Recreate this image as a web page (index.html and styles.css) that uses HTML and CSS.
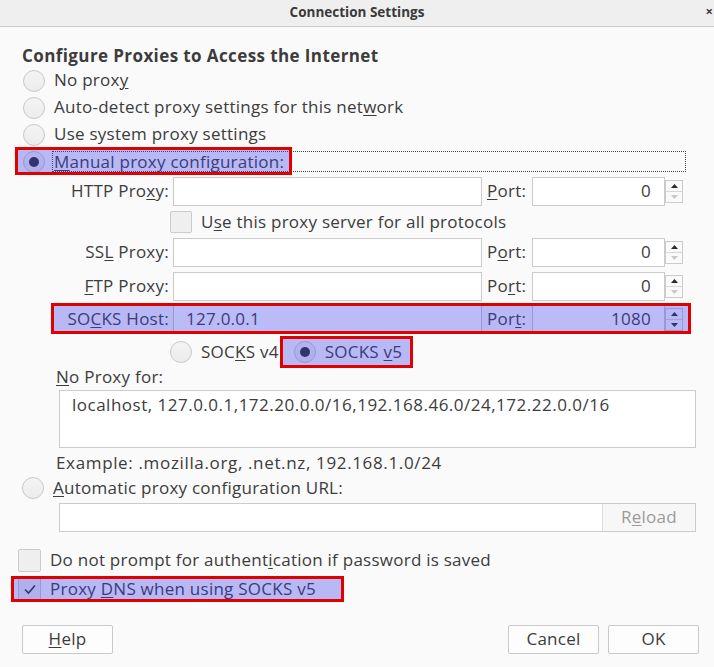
FILE: index.html
```html
<!DOCTYPE html>
<html>
<head>
<meta charset="utf-8">
<link rel="stylesheet" href="styles.css">
</head>
<body>
<div class="titlebar"><span class="title">Connection Settings</span><span class="close">×</span></div>
<main class="dialog">
  <h1 class="heading">Configure Proxies to Access the Internet</h1>
  <div class="radio-row"><span class="radio"></span><span class="lbl">No prox<u>y</u></span></div>
  <div class="radio-row"><span class="radio"></span><span class="lbl">Auto-detect proxy settings for this net<u>w</u>ork</span></div>
  <div class="radio-row"><span class="radio"></span><span class="lbl">Use system proxy settings</span></div>
  <div class="radio-row manual">
    <span class="radio checked"></span><span class="lbl focus"><u>M</u>anual proxy configuration:</span>
    <span class="mark mark-manual"></span>
  </div>

  <div class="prow first">
    <span class="plabel">HTTP Pro<u>x</u>y:</span>
    <span class="field host"></span>
    <span class="portlbl"><u>P</u>ort:</span>
    <span class="field port">0</span>
    <span class="spin"><span class="up"><svg width="7" height="4" viewBox="0 0 7 4"><polygon points="0,4 7,4 3.5,0" fill="#2a2a2a"/></svg></span><span class="down"><svg width="7" height="4" viewBox="0 0 7 4"><polygon points="0,0 7,0 3.5,4" fill="#c8c8c8"/></svg></span></span>
  </div>
  <div class="crow"><span class="check"></span><span class="lbl">U<u>s</u>e this proxy server for all protocols</span></div>
  <div class="prow">
    <span class="plabel">SS<u>L</u> Proxy:</span>
    <span class="field host"></span>
    <span class="portlbl">P<u>o</u>rt:</span>
    <span class="field port">0</span>
    <span class="spin"><span class="up"><svg width="7" height="4" viewBox="0 0 7 4"><polygon points="0,4 7,4 3.5,0" fill="#2a2a2a"/></svg></span><span class="down"><svg width="7" height="4" viewBox="0 0 7 4"><polygon points="0,0 7,0 3.5,4" fill="#c8c8c8"/></svg></span></span>
  </div>
  <div class="prow ftp">
    <span class="plabel"><u>F</u>TP Proxy:</span>
    <span class="field host"></span>
    <span class="portlbl">Po<u>r</u>t:</span>
    <span class="field port">0</span>
    <span class="spin"><span class="up"><svg width="7" height="4" viewBox="0 0 7 4"><polygon points="0,4 7,4 3.5,0" fill="#2a2a2a"/></svg></span><span class="down"><svg width="7" height="4" viewBox="0 0 7 4"><polygon points="0,0 7,0 3.5,4" fill="#c8c8c8"/></svg></span></span>
  </div>
  <div class="prow socks">
    <span class="plabel">SO<u>C</u>KS Host:</span>
    <span class="field host">127.0.0.1</span>
    <span class="portlbl">Por<u>t</u>:</span>
    <span class="field port">1080</span>
    <span class="spin"><span class="up"><svg width="7" height="4" viewBox="0 0 7 4"><polygon points="0,4 7,4 3.5,0" fill="#2a2a2a"/></svg></span><span class="down"><svg width="7" height="4" viewBox="0 0 7 4"><polygon points="0,0 7,0 3.5,4" fill="#2a2a2a"/></svg></span></span>
    <span class="mark mark-socks"></span>
  </div>
  <div class="vrow">
    <span class="radio"></span><span class="lbl v4">SOC<u>K</u>S v4</span>
    <span class="v5"><span class="radio checked"></span><span class="lbl">SOCKS <u>v</u>5</span><span class="mark mark-v5"></span></span>
  </div>
  <div class="noproxy-lbl"><u>N</u>o Proxy for:</div>
  <div class="textarea">localhost, 127.0.0.1,172.20.0.0/16,192.168.46.0/24,172.22.0.0/16</div>
  <div class="example">Example: .mozilla.org, .net.nz, 192.168.1.0/24</div>
  <div class="radio-row auto"><span class="radio"></span><span class="lbl"><u>A</u>utomatic proxy configuration URL:</span></div>
  <div class="urlrow"><span class="urlfield"></span><span class="reload">R<u>e</u>load</span></div>
  <div class="crow auth"><span class="check"></span><span class="lbl">Do not prompt for authent<u>i</u>cation if password is saved</span></div>
  <div class="crow dns">
    <span class="check"><svg width="14" height="12" viewBox="0 0 14 12"><path d="M2 6.5 L5.5 10 L12 2.5" fill="none" stroke="#2f2f2f" stroke-width="1.6"/></svg></span>
    <span class="lbl">Proxy <u>D</u>NS when using SOCKS v5</span>
    <span class="mark mark-dns"></span>
  </div>
  <div class="buttons">
    <span class="btn"><u>H</u>elp</span>
    <span class="spacer"></span>
    <span class="btn">Cancel</span>
    <span class="btn">OK</span>
  </div>
</main>
</body>
</html>
```
FILE: styles.css
```css
* { box-sizing: border-box; }
html, body { margin: 0; padding: 0; }
body {
  width: 714px;
  height: 667px;
  overflow: hidden;
  background: #fafafa;
  font-family: "Open Sans", "Noto Sans", sans-serif;
  font-size: 17px;
  letter-spacing: 0.25px;
  color: #3c3c3c;
}
u { text-decoration-thickness: 1px; text-underline-offset: 2px; }

.titlebar {
  height: 27px;
  background: #efefef;
  border-bottom: 1px solid #cdcdcd;
  display: flex;
  align-items: center;
  justify-content: center;
  position: relative;
  letter-spacing: 0;
}
.title { font-weight: bold; font-size: 13.5px; color: #3a3a3a; margin-top: -3px; }
.close { position: absolute; right: 1px; top: 2px; font-weight: bold; font-size: 13px; color: #3a3a3a; }

.heading {
  margin: 19px 0 0 22px;
  height: 21px;
  line-height: 20px;
  font-size: 17px;
  letter-spacing: 0.4px;
  font-weight: bold;
  color: #3c3c3c;
}

.radio-row {
  height: 27px;
  display: flex;
  align-items: center;
  padding-left: 23px;
  position: relative;
}
.radio {
  width: 22px;
  height: 22px;
  flex: none;
  border-radius: 50%;
  border: 1px solid #c9c9c9;
  background: linear-gradient(#f4f4f4, #ececec);
  display: flex;
  align-items: center;
  justify-content: center;
}
.radio.checked::after {
  content: "";
  width: 10px;
  height: 10px;
  border-radius: 50%;
  background: #2e2e35;
}
.lbl { margin-left: 9px; white-space: nowrap; line-height: 20px; margin-top: -1px; }
.focus {
  flex: none;
  width: 634px;
  height: 21px;
  line-height: 19px;
  border: 1px dotted #444;
  margin-left: 7px;
  margin-top: 0;
  padding-left: 1px;
}
.mark {
  position: absolute;
  border: 3px solid #e00000;
  background: rgba(61, 61, 235, 0.35);
  pointer-events: none;
}
.mark-manual { left: 15px; top: -1px; width: 277px; height: 28px; }

.prow {
  display: flex;
  margin-left: 54px;
  width: 634px;
  height: 29px;
  align-items: stretch;
  position: relative;
}
.prow.first { margin-top: 2px; }
.prow.ftp { margin-top: 5px; }
.prow.socks { margin-top: 4px; }
.plabel {
  width: 115px;
  text-align: right;
  line-height: 28px;
  white-space: nowrap;
}
.field {
  border: 1px solid #cbcbcb;
  background: #fff;
  line-height: 26px;
}
.host { width: 309px; margin-left: 4px; padding-left: 12px; }
.portlbl { width: 40px; margin-left: 5px; line-height: 28px; white-space: nowrap; }
.port { width: 133px; margin-left: 5px; text-align: right; padding-right: 13px; }
.spin {
  width: 18px;
  height: 23px;
  margin: 3px 0 0 0;
  border: 1px solid #cbcbcb;
  background: #fafafa;
  display: flex;
  flex-direction: column;
}
.spin .up, .spin .down {
  flex: 1;
  display: flex;
  align-items: center;
  justify-content: center;
}
.spin .up { border-bottom: 1px solid #d8d8d8; }
.spin svg { display: block; }
.mark-socks { left: -3px; top: -2px; width: 640px; height: 31px; }

.crow {
  height: 32px;
  display: flex;
  align-items: center;
  padding-left: 170px;
  position: relative;
}
.check {
  width: 22px;
  height: 22px;
  flex: none;
  border: 1px solid #cbcbcb;
  border-radius: 2px;
  background: #efefef;
  display: flex;
  align-items: center;
  justify-content: center;
}

.vrow {
  margin-top: 2px;
  height: 32px;
  display: flex;
  align-items: center;
  padding-left: 170px;
}
.v5 {
  position: relative;
  display: flex;
  align-items: center;
  height: 32px;
  margin-left: 15px;
}
.mark-v5 { left: -14px; top: 0; width: 133px; height: 32px; }

.noproxy-lbl {
  margin-left: 56px;
  height: 18px;
  line-height: 17px;
}
.textarea {
  margin: 4px 0 0 59px;
  width: 637px;
  height: 58px;
  border: 1px solid #cbcbcb;
  background: #fff;
  padding: 3px 0 0 12px;
  line-height: 21px;
  letter-spacing: 0.5px;
  white-space: nowrap;
}
.example {
  margin: 6px 0 0 56px;
  height: 18px;
  line-height: 17px;
  letter-spacing: 0.65px;
}
.radio-row.auto { margin-top: 4px; height: 24px; padding-left: 22px; }

.urlrow {
  margin: 3px 0 0 59px;
  width: 637px;
  height: 29px;
  border: 1px solid #cbcbcb;
  background: #fff;
  display: flex;
}
.urlfield { flex: 1; }
.reload {
  width: 93px;
  border-left: 1px solid #dcdcdc;
  background: #f7f7f7;
  color: #9b9b9b;
  text-align: center;
  line-height: 26px;
}

.crow.auth { margin-top: 16px; height: 24px; padding-left: 18px; }
.crow.auth .check, .crow.dns .check { width: 23px; height: 23px; }
.crow.dns { margin-top: 4px; height: 26px; padding-left: 18px; }
.mark-dns { left: 11px; top: 0; width: 333px; height: 26px; }

.buttons {
  margin: 23px 0 0 22px;
  width: 677px;
  height: 29px;
  display: flex;
}
.spacer { flex: 1; }
.btn {
  width: 91px;
  height: 29px;
  border: 1px solid #c9c9c9;
  border-radius: 2px;
  background: #fdfdfd;
  text-align: center;
  line-height: 26px;
}
.btn + .btn { margin-left: 9px; }
```
